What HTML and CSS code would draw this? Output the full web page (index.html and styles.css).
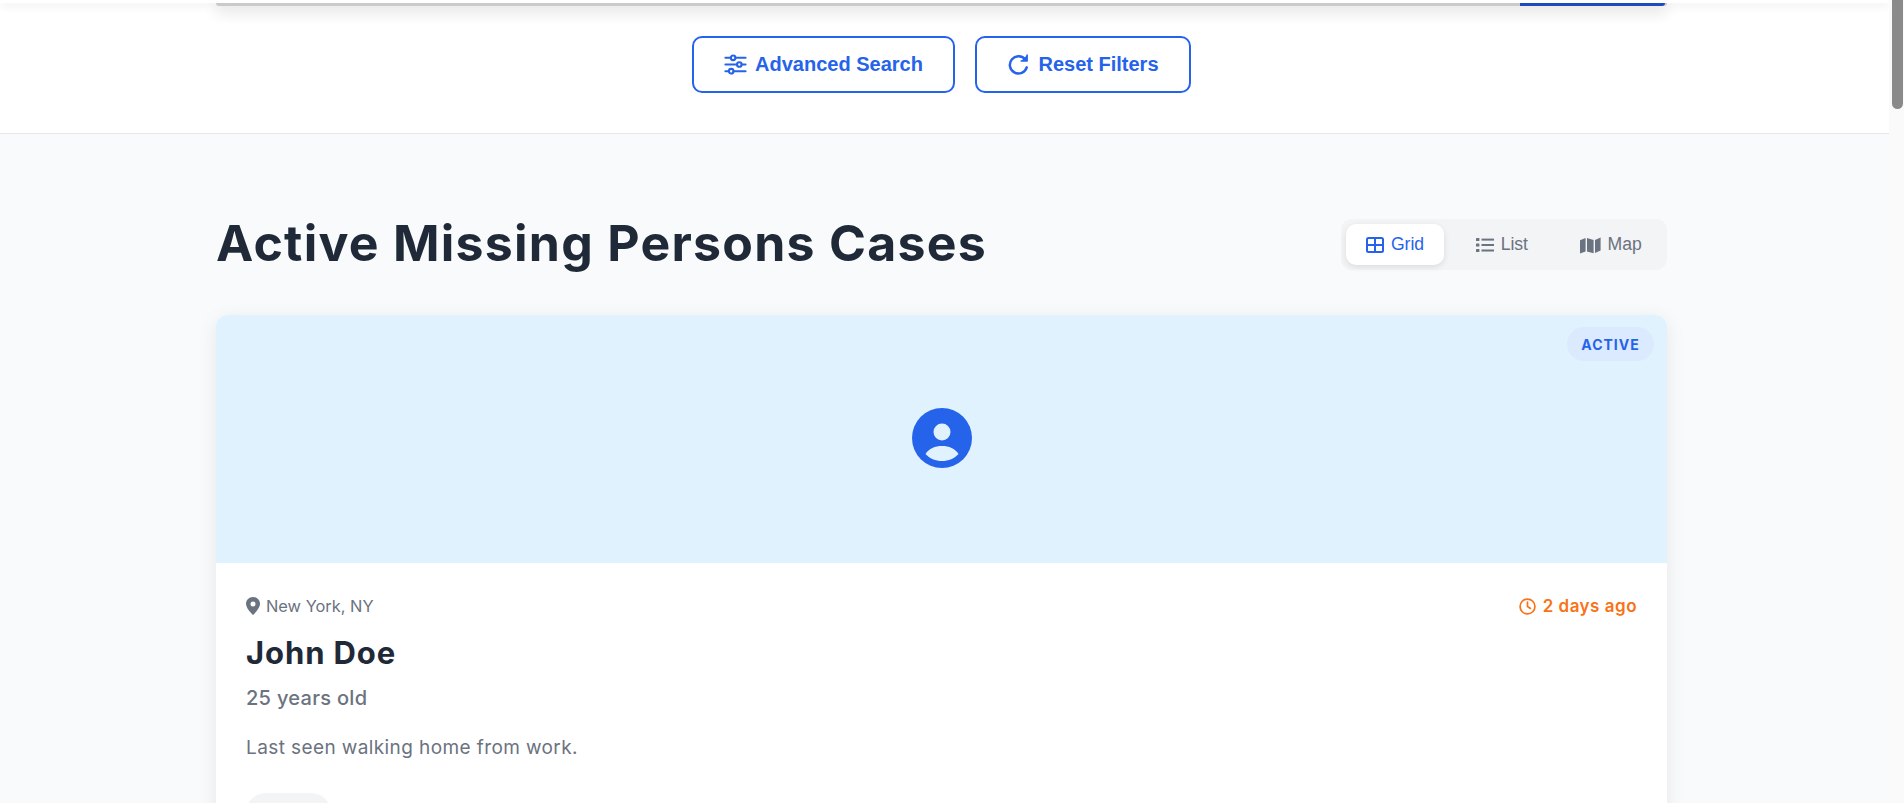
FILE: index.html
```html
<!DOCTYPE html>
<html lang="en">

<head>
    <meta charset="UTF-8">
    <meta name="viewport" content="width=device-width, initial-scale=1.0">
    <title>Active Missing Persons Cases</title>
    <link rel="stylesheet" href="styles.css">
</head>

<body>
    <div class="page">
        <header class="site-header"></header>

        <section class="search-section">
            <div class="search-bar">
                <div class="search-btn"></div>
            </div>
            <div class="search-actions">
                <button class="btn-outline btn-advanced">
                    <svg class="btn-icon" viewBox="0 0 24 24" fill="none" stroke="currentColor" stroke-width="2.2" stroke-linecap="round">
                        <path d="M1.5 5H7M12 5H22.5M1.5 12H13.5M18.5 12H22.5M1.5 19H5M10 19H22.5" />
                        <circle cx="9.5" cy="5" r="2.4" />
                        <circle cx="16" cy="12" r="2.4" />
                        <circle cx="7.5" cy="19" r="2.4" />
                    </svg>
                    Advanced Search
                </button>
                <button class="btn-outline btn-reset">
                    <svg class="btn-icon" viewBox="0 0 24 24" fill="none" stroke="currentColor" stroke-width="2.6" stroke-linecap="round">
                        <path d="M19.2 7A9 9 0 1 0 20.6 15" />
                        <path d="M21 2.2V8.4H14.8" fill="currentColor" stroke-width="1.6" stroke-linejoin="round" />
                    </svg>
                    Reset Filters
                </button>
            </div>
        </section>

        <main class="cases-section">
            <div class="cases-head">
                <h1>Active Missing Persons Cases</h1>
                <div class="view-toggle">
                    <button class="view-btn active">
                        <svg class="view-icon" viewBox="0 0 18 18" fill="none" stroke="currentColor" stroke-width="2">
                            <rect x="1" y="2" width="16" height="14" rx="1.5" />
                            <path d="M1 9H17M9 2V16" />
                        </svg>
                        Grid
                    </button>
                    <button class="view-btn">
                        <svg class="view-icon" viewBox="0 0 18 18" fill="currentColor">
                            <rect x="0" y="2" width="3.4" height="3" rx=".6" />
                            <rect x="0" y="7.5" width="3.4" height="3" rx=".6" />
                            <rect x="0" y="13" width="3.4" height="3" rx=".6" />
                            <rect x="5.5" y="2.6" width="12.5" height="2" />
                            <rect x="5.5" y="8" width="12.5" height="2" />
                            <rect x="5.5" y="13.5" width="12.5" height="2" />
                        </svg>
                        List
                    </button>
                    <button class="view-btn">
                        <svg class="view-icon view-icon-map" viewBox="0 0 21 18" fill="currentColor">
                            <path d="M0 4.2 5.6 2V15.6L0 17.4Z" />
                            <path d="M7 2 13.6 4V17.2L7 15.6Z" />
                            <path d="M15 4 20.6 1.6V14.4L15 17Z" />
                        </svg>
                        Map
                    </button>
                </div>
            </div>

            <article class="case-card">
                <div class="case-image">
                    <span class="badge">ACTIVE</span>
                    <svg class="avatar" viewBox="0 0 60 60">
                        <circle cx="30" cy="30" r="30" fill="#2563eb" />
                        <circle cx="30" cy="24" r="8.5" fill="#e0f2fe" />
                        <path d="M13.5 46C17 40.5 23 38 30 38S43 40.5 46.5 46C42.5 50.5 36.5 53 30 53S17.5 50.5 13.5 46Z" fill="#e0f2fe" />
                    </svg>
                </div>
                <div class="case-body">
                    <div class="case-meta">
                        <span class="location">
                            <svg class="pin" viewBox="0 0 14 18" fill="currentColor">
                                <path fill-rule="evenodd" d="M7 0C3.1 0 0 3 0 6.8 0 11 5 16.2 7 18 9 16.2 14 11 14 6.8 14 3 10.9 0 7 0ZM7 4.4A2.5 2.5 0 1 1 7 9.4 2.5 2.5 0 0 1 7 4.4Z" />
                            </svg>
                            New York, NY
                        </span>
                        <span class="time-ago">
                            <svg class="clock" viewBox="0 0 16 16" fill="none" stroke="currentColor" stroke-width="1.6" stroke-linecap="round">
                                <circle cx="8" cy="8" r="7" />
                                <path d="M8 3.8V8L10.8 9.8" />
                            </svg>
                            2 days ago
                        </span>
                    </div>
                    <h2>John Doe</h2>
                    <p class="age">25 years old</p>
                    <p class="summary">Last seen walking home from work.</p>
                    <div class="tag"></div>
                </div>
            </article>
        </main>
    </div>

    <div class="scrollbar">
        <div class="scrollbar-thumb"></div>
    </div>
</body>

</html>
```

FILE: styles.css
```css
/* General Reset */
* {
    margin: 0;
    padding: 0;
    box-sizing: border-box;
}

body {
    height: 100vh;
    display: flex;
    overflow: hidden;
    font-family: 'Inter', sans-serif;
    background: #f9fafb;
}

.page {
    flex: 1;
    height: 100%;
    overflow: hidden;
}

/* Scrollbar */
.scrollbar {
    width: 15px;
    background: #fafafa;
    padding: 0 1px 0 3px;
}

.scrollbar-thumb {
    height: 109px;
    background: #8a8a8a;
    border-radius: 0 0 6px 6px;
}

/* Header + search */
.site-header {
    height: 3px;
    background: #fff;
    box-shadow: 0 2px 10px rgba(0, 0, 0, 0.12);
    position: relative;
    z-index: 2;
}

.search-section {
    height: 131px;
    background: #fff;
    border-bottom: 1px solid #e5e7eb;
}

.search-bar {
    width: 1451px;
    height: 3px;
    margin-left: 216px;
    display: flex;
    justify-content: flex-end;
    background: #d0d0d0;
    border-radius: 0 0 6px 6px;
    box-shadow: 0 5px 14px rgba(0, 0, 0, 0.3);
}

.search-btn {
    width: 145px;
    margin-right: 2px;
    background: #1d4fc4;
    border-radius: 0 0 6px 0;
}

.search-actions {
    width: 1451px;
    margin-left: 216px;
    padding-top: 30px;
    display: flex;
    justify-content: center;
    gap: 20px;
}

.btn-outline {
    height: 57px;
    display: flex;
    align-items: center;
    justify-content: center;
    gap: 8px;
    background: #fff;
    color: #2563eb;
    border: 2px solid #2563eb;
    border-radius: 10px;
    font-family: 'Liberation Sans', Arial, sans-serif;
    font-size: 20px;
    font-weight: 700;
}

.btn-advanced {
    width: 263px;
}

.btn-reset {
    width: 216px;
}

.btn-icon {
    width: 23px;
    height: 23px;
}

/* Cases */
.cases-section {
    width: 1451px;
    margin-left: 216px;
    padding-top: 85px;
}

.cases-head {
    display: flex;
    justify-content: space-between;
    align-items: center;
    margin-bottom: 45px;
}

h1 {
    padding-bottom: 4px;
    font-size: 50px;
    line-height: 44px;
    font-weight: 700;
    letter-spacing: 1.25px;
    color: #1f2937;
}

.view-toggle {
    display: flex;
    gap: 11px;
    padding: 5px;
    background: #f3f4f6;
    border-radius: 11px;
}

.view-btn {
    height: 41px;
    padding: 0 20.25px;
    display: flex;
    align-items: center;
    gap: 7px;
    border: none;
    background: transparent;
    border-radius: 10px;
    color: #6b7280;
    font-family: 'Liberation Sans', Arial, sans-serif;
    font-size: 17.6px;
}

.view-btn.active {
    background: #fff;
    color: #2563eb;
    box-shadow: 0 2px 6px rgba(0, 0, 0, 0.1);
}

.view-icon {
    width: 18px;
    height: 18px;
}

.view-icon-map {
    width: 21px;
}

.case-card {
    background: #fff;
    border-radius: 12px;
    box-shadow: 0 4px 20px rgba(0, 0, 0, 0.08);
}

.case-image {
    height: 248px;
    padding-bottom: 2px;
    display: flex;
    justify-content: center;
    align-items: center;
    background: #e0f2fe;
    border-radius: 12px 12px 0 0;
    position: relative;
}

.badge {
    position: absolute;
    top: 12px;
    right: 13px;
    width: 87px;
    height: 34px;
    display: flex;
    align-items: center;
    justify-content: center;
    background: #dbeafe;
    color: #2563eb;
    border-radius: 17px;
    font-size: 14px;
    font-weight: 700;
    letter-spacing: 1px;
}

.avatar {
    width: 60px;
    height: 60px;
}

.case-body {
    padding: 33px 30px 40px;
}

.case-meta {
    display: flex;
    justify-content: space-between;
    align-items: center;
    height: 20px;
}

.location {
    display: flex;
    align-items: center;
    gap: 6px;
    color: #6b7280;
    font-size: 16.4px;
}

.pin {
    width: 14px;
    height: 18px;
}

.time-ago {
    display: flex;
    align-items: center;
    gap: 7px;
    color: #f97316;
    font-size: 17px;
    font-weight: 600;
    letter-spacing: 0.5px;
}

.clock {
    width: 17px;
    height: 17px;
}

h2 {
    margin-top: 17px;
    font-size: 31px;
    line-height: 40px;
    font-weight: 700;
    letter-spacing: 0.9px;
    color: #1f2937;
}

.age {
    margin-top: 11px;
    font-size: 20px;
    line-height: 28px;
    font-weight: 500;
    letter-spacing: 0.3px;
    color: #6b7280;
}

.summary {
    margin-top: 22px;
    font-size: 19px;
    line-height: 28px;
    letter-spacing: 0.4px;
    color: #6b7280;
}

.tag {
    width: 85px;
    height: 40px;
    margin-top: 31px;
    background: #f3f4f6;
    border-radius: 20px;
}
```
